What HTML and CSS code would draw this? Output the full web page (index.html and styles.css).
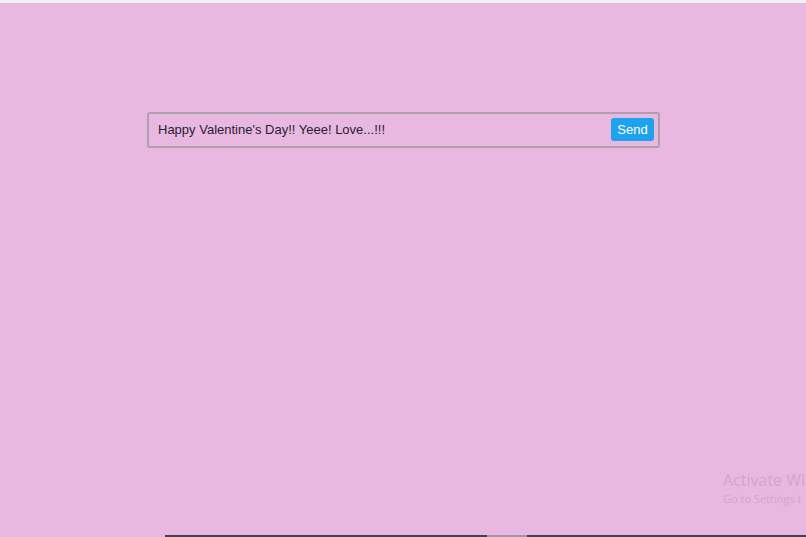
FILE: index.html
```html
<!DOCTYPE html>
<html>
<head>
<meta charset="utf-8">
<link rel="stylesheet" href="styles.css">
</head>
<body>
<div class="topstrip"></div>
<main class="page">
  <form class="msgbox" onsubmit="return false">
    <input class="msginput" type="text" value="Happy Valentine's Day!! Yeee! Love...!!!">
    <button class="send" type="submit">Send</button>
  </form>
</main>
<div class="watermark">
  <div class="wm-title">Activate Wi</div>
  <div class="wm-sub">Go to Settings t</div>
</div>
<div class="bottombar"><span class="bb-thumb"></span></div>
</body>
</html>
```
FILE: styles.css
```css
html, body {
  margin: 0;
  padding: 0;
  height: 100%;
  overflow: hidden;
}
body {
  background: #e8b8e0;
  font-family: "Liberation Sans", Arial, sans-serif;
  position: relative;
}
.topstrip {
  height: 3px;
  background: #f1f1f1;
}
.page {
  padding-top: 109px;
  padding-left: 147px;
}
.msgbox {
  box-sizing: border-box;
  width: 513px;
  height: 36px;
  border: 2px solid #aba0ab;
  border-radius: 3px;
  display: flex;
  align-items: center;
  padding: 0 4px 1px 9px;
  margin: 0;
}
.msginput {
  flex: 1;
  border: none;
  background: transparent;
  outline: none;
  font-family: "Liberation Sans", Arial, sans-serif;
  font-size: 13px;
  color: #2a2230;
  padding: 0;
  margin: 0;
  height: 20px;
}
.send {
  background: #1ea2ee;
  color: #ffffff;
  border: none;
  border-radius: 3px;
  font-family: "Liberation Sans", Arial, sans-serif;
  font-size: 13px;
  height: 23px;
  width: 43px;
  padding: 0;
  margin: 0;
}
.watermark {
  position: absolute;
  left: 723px;
  top: 470px;
  color: #d2a6cb;
  font-family: "Open Sans", "Noto Sans", sans-serif;
  white-space: nowrap;
}
.wm-title {
  font-size: 16px;
  line-height: 20px;
}
.wm-sub {
  font-size: 11px;
  line-height: 17px;
}
.bottombar {
  position: absolute;
  left: 165px;
  right: 0;
  bottom: 0;
  height: 2px;
  background: #4a3d52;
}
.bb-thumb {
  position: absolute;
  left: 322px;
  width: 40px;
  top: 0;
  height: 2px;
  background: #a892a6;
}
```
